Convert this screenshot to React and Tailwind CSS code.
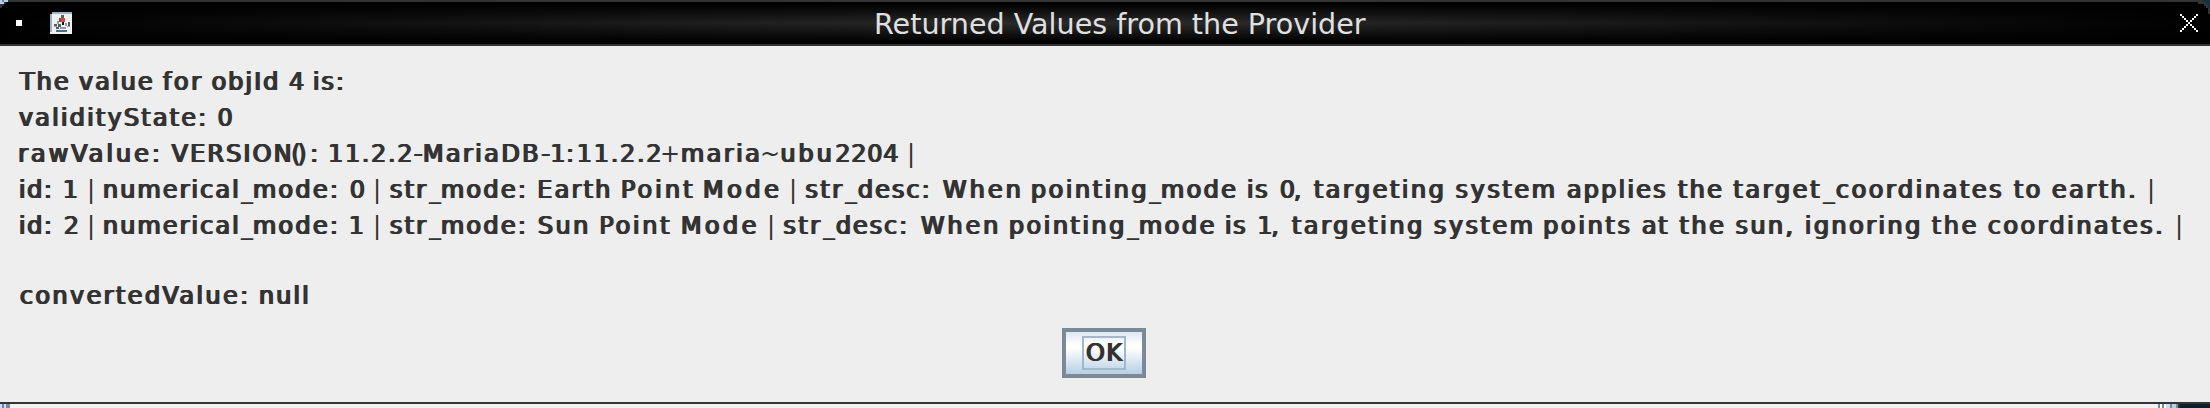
import { useMemo } from "react";

const FAMILY = '"DejaVu Sans", sans-serif';

// Each run: [text, left, right, kind]; "n" is the lighter cut for digits and marks, "p" is plain.
const LINES = [
  [["The", 18, 68.7], ["value", 78, 152.7], ["for", 162, 202], ["objId", 211.7, 278], ["4", 289.3, 304, "n"], ["is:", 314, 342.7]],
  [["validityState:", 18, 205], ["0", 217.7, 232.3, "n"]],
  [["rawValue:", 19.3, 158.7], ["VERSION", 170.7, 290.5], ["()", 292.5, 306, "n"], [":", 311.3, 316.7], ["11.2.2", 329.3, 411, "n"], ["-", 414, 422], ["MariaDB", 424, 538], ["-", 541.5, 550], ["1:", 551.5, 572.8, "n"], ["11.2.2", 578, 660, "n"], ["+", 662, 676, "p"], ["maria", 682, 759], ["~", 762, 778, "p"], ["ubu", 781.5, 831.5], ["2204", 835.6, 898, "n"], ["|", 910, 912, "p"]],
  [["id:", 20, 50.7], ["1", 64, 76, "n"], ["|", 90, 92, "p"], ["numerical", 104, 238], ["_", 240, 252, "p"], ["mode:", 254, 336.7], ["0", 350, 364, "n"], ["|", 376, 378, "p"], ["str", 390, 427], ["_", 428, 440, "p"], ["mode:", 442, 524.7], ["Earth", 538.4, 610], ["Point", 622, 693], ["Mode", 704, 779], ["|", 792, 794, "p"], ["str", 805.6, 843], ["_", 844, 856, "p"], ["desc:", 858, 928.6], ["When", 942, 1020.6], ["pointing", 1032, 1146.3], ["_", 1148, 1160, "p"], ["mode", 1162, 1236], ["is", 1248, 1268], ["0,", 1280, 1300.6, "n"], ["targeting", 1313, 1443.5], ["system", 1455.7, 1554.5], ["applies", 1567, 1666], ["the", 1677, 1722], ["target", 1732.5, 1820], ["_", 1822, 1834, "p"], ["coordinates", 1836, 2002], ["to", 2013, 2040.6], ["earth.", 2052, 2135], ["|", 2150, 2152, "p"]],
  [["id:", 20, 50.7], ["2", 64, 78.5, "n"], ["|", 90, 92, "p"], ["numerical", 104, 238], ["_", 240, 252, "p"], ["mode:", 254, 336.7], ["1", 350, 362, "n"], ["|", 376, 378, "p"], ["str", 390, 427], ["_", 428, 440, "p"], ["mode:", 442, 524.7], ["Sun", 538, 588], ["Point", 600.4, 670], ["Mode", 682, 756.4], ["|", 770, 772, "p"], ["str", 783.6, 821], ["_", 822, 834, "p"], ["desc:", 836, 906], ["When", 920, 998], ["pointing", 1010, 1124], ["_", 1126, 1138, "p"], ["mode", 1140, 1214.5], ["is", 1226, 1246], ["1,", 1258.6, 1278, "n"], ["targeting", 1291, 1422], ["system", 1434, 1532.5], ["points", 1544.3, 1630.4], ["at", 1642, 1668], ["the", 1678.6, 1724], ["sun,", 1735.7, 1792.4], ["ignoring", 1806, 1920], ["the", 1931, 1976.5], ["coordinates.", 1988, 2162], ["|", 2178, 2180, "p"]],
  [],
  [["convertedValue:", 20, 247], ["null", 260, 308]],
];

const SMEAR = { p: 0, n: 1.5, b: 1.7 };

const CUTS = {
  p: "shrink-0",
  n: "shrink-0 [text-shadow:0.8px_0_#333,1.5px_0_#333]",
  b: "shrink-0 [text-shadow:0.9px_0_#333,1.7px_0_#333]",
};

function fitRuns(runs) {
  const ctx = document.createElement("canvas").getContext("2d");
  ctx.font = `400 24px ${FAMILY}`;
  const placed = runs.map(([text, left, right, kind = "b"]) => {
    const m = ctx.measureText(text);
    const ink = m.actualBoundingBoxRight + m.actualBoundingBoxLeft + SMEAR[kind];
    const spacing = text.length > 1 ? (right - left - ink) / (text.length - 1) : 0;
    return { text, kind, spacing, start: left + m.actualBoundingBoxLeft };
  });
  return placed.map((r, i) => ({
    ...r,
    lead: i === 0 ? r.start : 0,
    width: i + 1 < placed.length ? placed[i + 1].start - r.start : undefined,
  }));
}

function Line({ runs }) {
  const fitted = useMemo(() => fitRuns(runs), [runs]);
  return (
    <div className="flex h-9 whitespace-nowrap leading-9 last:-mt-0.5">
      {fitted.map((r, i) => (
        <span key={i} className={CUTS[r.kind]} style={{ marginLeft: r.lead, width: r.width, letterSpacing: r.spacing }}>
          {r.text}
        </span>
      ))}
    </div>
  );
}

function JavaIcon() {
  return (
    <svg className="ml-7 size-[22px]" viewBox="0 0 22 22" shapeRendering="crispEdges">
      <path fill="#eef0f2" d="M0 2h2V0h20v22H0z" />
      <path fill="#9db4c8" d="M2 0h20v2H2zM0 2h2v18H0z" />
      <path fill="#5c5c5c" d="M11 3h3v3h-3zM9 6h3v4H9zM4 12h3v2H4zM8 12h3v3H8zM18 10h2v4h-2zM6 15h3v2H6z" />
      <path fill="#111" d="M12 10h2v3h-2z" />
      <path fill="#d9463e" d="M11 6h4v4h-4z" />
      <path fill="#9a9d9f" d="M7 9h2v3H7zM15 11h2v3h-2zM10 15h6v2h-6zM4 14h3v1H4zM17 14h3v1h-3z" />
      <path fill="#4c6e8c" d="M6 18h11v2H6z" />
    </svg>
  );
}

export default function App() {
  return (
    <div className="flex h-[408px] w-[2210px] flex-col overflow-hidden bg-[#eee] font-['DejaVu_Sans',sans-serif] text-[24px] text-[#333]">
      <header className="relative flex h-[46px] shrink-0 items-center border-y-2 border-[#333] bg-[linear-gradient(90deg,#000_0%,transparent_45%,transparent_55%,#000_100%),linear-gradient(180deg,#000_0%,#000_5%,#2a2a2a_50%,#000_95%)]">
        <span className="ml-4 size-1.5 bg-white" />
        <JavaIcon />
        <h1 className="absolute left-[874px] top-0 whitespace-nowrap text-[28.6px] leading-[44px] text-[#e0e0e0]">Returned Values from the Provider</h1>
        <svg className="ml-auto mr-3 size-[18px]" viewBox="0 0 9 9" shapeRendering="crispEdges">
          <path fill="#fff" d="M0 0h1v1H0zM1 1h1v1H1zM2 2h1v1H2zM3 3h1v1H3zM4 4h1v1H4zM5 5h1v1H5zM6 6h1v1H6zM7 7h1v1H7zM8 8h1v1H8zM8 0h1v1H8zM7 1h1v1H7zM6 2h1v1H6zM5 3h1v1H5zM3 5h1v1H3zM2 6h1v1H2zM1 7h1v1H1zM0 8h1v1H0z" />
        </svg>
        <svg className="absolute -top-0.5 left-0 h-2 w-2.5" viewBox="0 0 10 8" shapeRendering="crispEdges">
          <path fill="#333" d="M0 0h10v2H6v2H4v2H2v2H0z" />
          <path fill="#b8cfe5" d="M0 0h8v2H4v2H0z" />
          <path fill="#6382bf" d="M2 0h2v2H2z" />
        </svg>
        <svg className="absolute -top-0.5 right-0 h-3.5 w-3" viewBox="0 0 12 14" shapeRendering="crispEdges">
          <path fill="#333" d="M0 0h12v14h-2V8H8V6H6V4H0z" />
          <path fill="#16323f" d="M4 0h8v8h-2V4H8V2H4z" />
        </svg>
      </header>

      <main className="flex h-[356px] shrink-0 flex-col">
        <div className="flex flex-col pt-[18px]">
          {LINES.map((runs, i) => (
            <Line key={i} runs={runs} />
          ))}
        </div>
        <button className="ml-[1062px] mt-3.5 flex h-[50px] w-[84px] items-center justify-center border-4 border-[#7a8a99] bg-[linear-gradient(180deg,#dde8f3_0%,#fff_30%,#fff_38%,#b8cfe5_100%)]">
          <span className="flex h-[34px] w-11 items-center justify-center border-2 border-[#a3b8cc] text-[24px] leading-none tracking-[1.5px] [text-shadow:0.9px_0_#333,1.7px_0_#333]">OK</span>
        </button>
      </main>

      <footer className="flex h-1.5 shrink-0 border-t-2 border-[#333] bg-[#f2f1f1]">
        <span className="w-0.5 bg-[#c8ddf2]" />
        <span className="w-0.5 bg-[#6382bf]" />
        <span className="w-0.5 bg-[#c8ddf2]" />
        <span className="w-1 bg-[#7a8a99]" />
        <span className="ml-auto w-0.5 bg-[#7a8a99]" />
        <span className="w-0.5 bg-white" />
        <span className="w-0.5 bg-[#7a8a99]" />
        <span className="w-0.5 bg-white" />
        <span className="w-1 bg-[#c8ddf2]" />
        <span className="w-0.5 bg-[#7a8a99]" />
        <span className="w-1 bg-[#b8cfe5]" />
        <span className="w-0.5 bg-[#7a8a99]" />
        <span className="w-0.5 bg-[#333]" />
        <span className="w-[30px] bg-[#0a1e2e]" />
      </footer>
    </div>
  );
}
